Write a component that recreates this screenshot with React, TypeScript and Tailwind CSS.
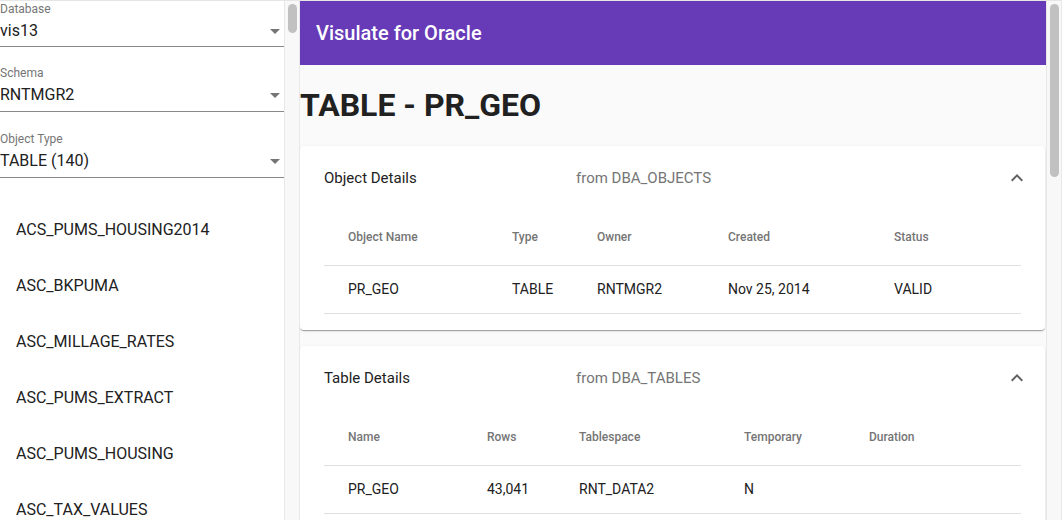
import React from 'react';

const selects = [
  { label: 'Database', value: 'vis13', mt: '', h: 'h-[29px]' },
  { label: 'Schema', value: 'RNTMGR2', mt: 'mt-[18px]', h: 'h-[30px]' },
  { label: 'Object Type', value: 'TABLE (140)', mt: 'mt-[19px]', h: 'h-[30px]' },
];

const objects = [
  'ACS_PUMS_HOUSING2014',
  'ASC_BKPUMA',
  'ASC_MILLAGE_RATES',
  'ASC_PUMS_EXTRACT',
  'ASC_PUMS_HOUSING',
  'ASC_TAX_VALUES',
];

const ArrowDropDown = () => (
  <svg viewBox="0 0 24 24" className="h-6 w-6 fill-[#757575]">
    <path d="M7 10l5 5 5-5z" />
  </svg>
);

const ExpandLess = () => (
  <svg viewBox="0 0 24 24" className="h-6 w-6 fill-[#616161]">
    <path d="M12 8l-6 6 1.41 1.41L12 10.83l4.59 4.58L18 14z" />
  </svg>
);

const Scrollbar = ({ thumb }: { thumb: string }) => (
  <div className="flex w-[16px] shrink-0 justify-center border-l border-r border-[#e8e8e8] bg-[#f8f8f8] pt-[3px]">
    <div className={`w-[9px] rounded-full bg-[#c1c1c1] ${thumb}`} />
  </div>
);

type DetailsProps = {
  title: string;
  source: string;
  cols: string;
  headers: string[];
  row: string[];
};

const DetailsCard = ({ title, source, cols, headers, row }: DetailsProps) => (
  <div className="mr-[1px] rounded bg-white shadow-[0_2px_1px_-1px_rgba(0,0,0,0.2),0_1px_1px_0_rgba(0,0,0,0.14),0_1px_3px_0_rgba(0,0,0,0.12)]">
    <div className="flex h-16 items-center pl-6 pr-4">
      <span className="w-[252px] text-[15px] text-[#212121]">{title}</span>
      <span className="flex-1 text-[15px] text-[#757575]">{source}</span>
      <ExpandLess />
    </div>
    <div className="px-6 pb-4">
      <div className={`grid ${cols} h-[56px] items-center border-b border-[#e0e0e0] pb-[2px] text-xs font-medium text-[#757575]`}>
        {headers.map((h) => (
          <span key={h} className="pl-6">{h}</span>
        ))}
      </div>
      <div className={`grid ${cols} h-[48px] items-center border-b border-[#e0e0e0] pb-px text-sm text-[#212121]`}>
        {row.map((c, i) => (
          <span key={i} className="pl-6">{c}</span>
        ))}
      </div>
    </div>
  </div>
);

export default function App() {
  return (
    <div className="flex h-[520px] w-[1062px] overflow-hidden border-t border-[#e6e6e6] bg-white font-['Roboto',sans-serif]">
      {/* Sidebar */}
      <aside className="flex w-[284px] shrink-0 flex-col overflow-hidden">
        {selects.map((s) => (
          <div key={s.label} className={`flex flex-col border-b border-[#8a8a8a] ${s.mt}`}>
            <span className="h-4 text-xs leading-4 text-[#757575]">{s.label}</span>
            <div className={`flex ${s.h} items-center justify-between pb-[2px]`}>
              <span className="text-base text-[#212121]">{s.value}</span>
              <span className="-mr-[3px]">
                <ArrowDropDown />
              </span>
            </div>
          </div>
        ))}
        <ul className="pt-[24px]">
          {objects.map((o) => (
            <li key={o} className="flex h-14 items-center px-4 text-base text-[#212121]">
              {o}
            </li>
          ))}
        </ul>
      </aside>
      <Scrollbar thumb="h-[29px]" />

      {/* Main */}
      <main className="flex min-w-0 flex-1 flex-col overflow-hidden bg-[#fafafa]">
        <header className="flex h-16 shrink-0 items-center bg-[#673ab7] px-4 text-xl font-medium text-white">
          Visulate for Oracle
        </header>
        <h1 className="pt-[20px] pb-[21px] text-[32px] leading-[40px] font-bold text-[#212121]">TABLE - PR_GEO</h1>
        <div className="flex flex-col gap-4">
          <DetailsCard
            title="Object Details"
            source="from DBA_OBJECTS"
            cols="grid-cols-[164px_85px_131px_166px_152px]"
            headers={['Object Name', 'Type', 'Owner', 'Created', 'Status']}
            row={['PR_GEO', 'TABLE', 'RNTMGR2', 'Nov 25, 2014', 'VALID']}
          />
          <DetailsCard
            title="Table Details"
            source="from DBA_TABLES"
            cols="grid-cols-[139px_92px_165px_125px_177px]"
            headers={['Name', 'Rows', 'Tablespace', 'Temporary', 'Duration']}
            row={['PR_GEO', '43,041', 'RNT_DATA2', 'N', '']}
          />
        </div>
      </main>
      <Scrollbar thumb="h-[173px]" />
    </div>
  );
}
